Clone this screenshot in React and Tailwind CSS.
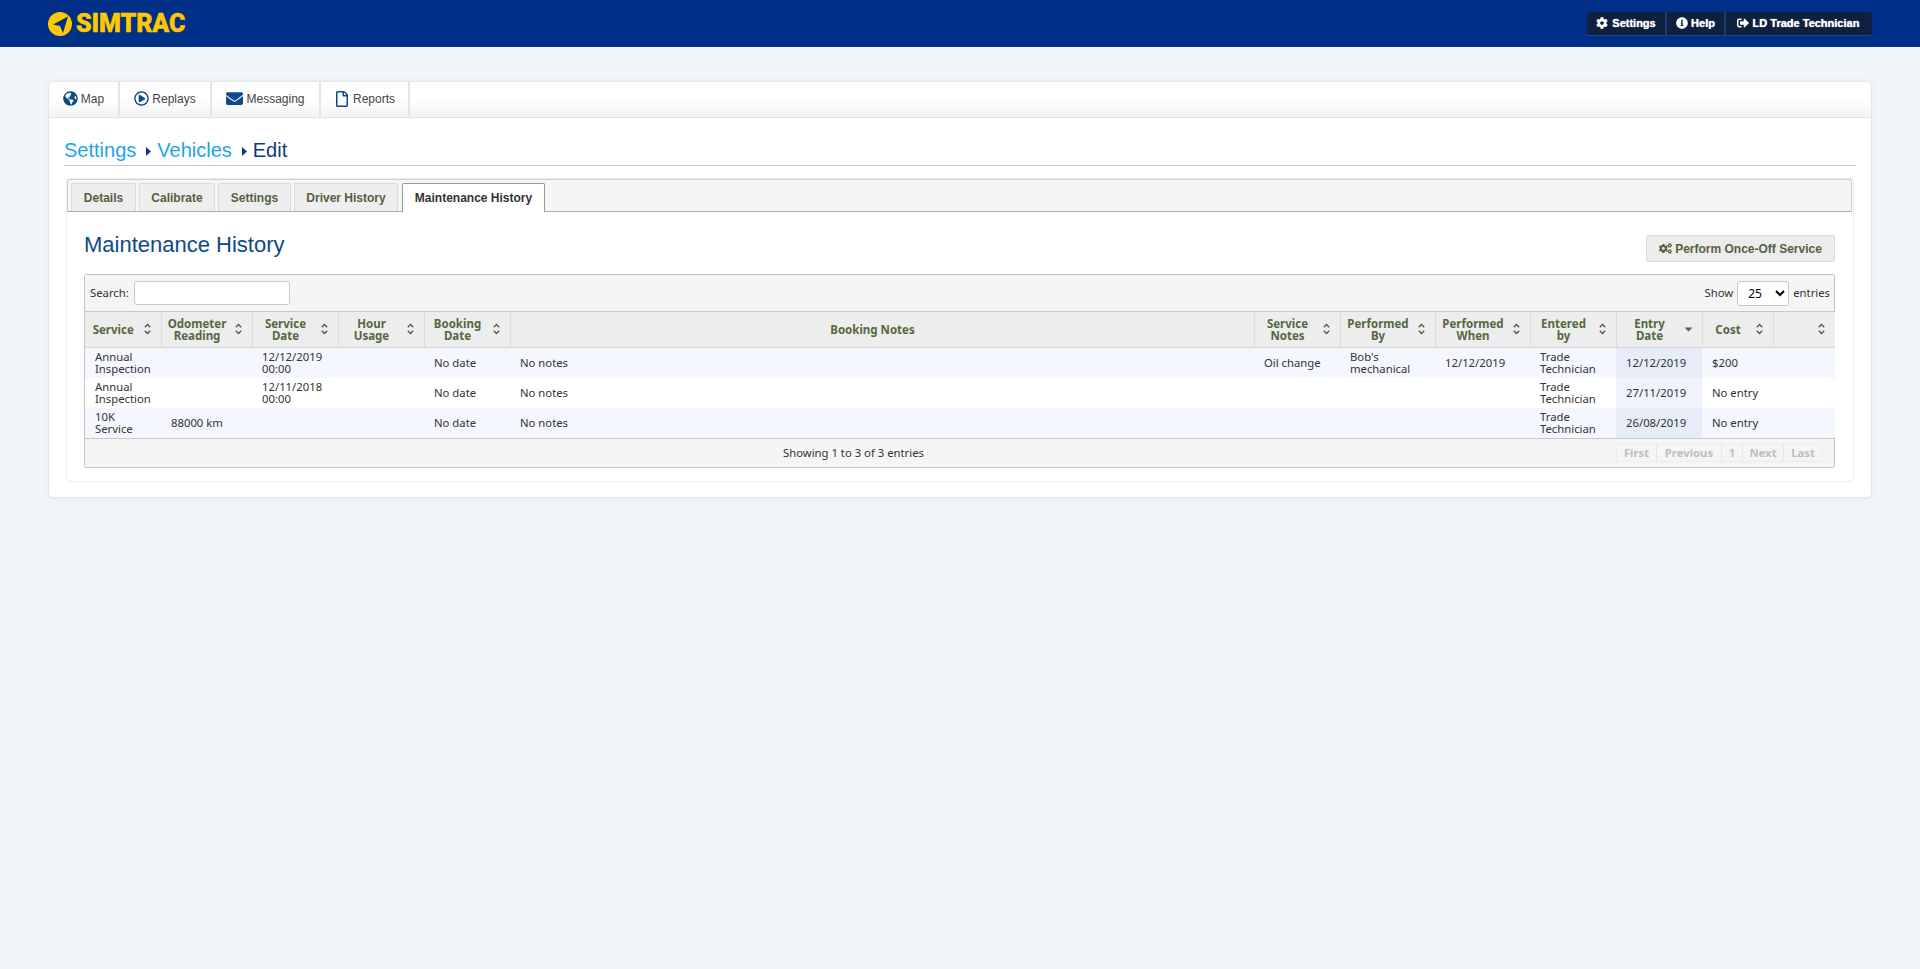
import React from "react";
import { FaGlobeAmericas, FaRegPlayCircle, FaEnvelope, FaRegFile, FaCog, FaInfoCircle, FaSignOutAlt, FaCogs } from "react-icons/fa";

const Sort = ({ active }) => (
  <span className="absolute right-[9px] top-1/2 -translate-y-1/2 w-[9px] h-[12px] flex items-center justify-center">
    {active ? (
      <svg width="9" height="5" viewBox="0 0 9 5"><path d="M0.5 0.5h8L4.5 4.5z" fill="#4f6a3a" /></svg>
    ) : (
      <svg width="9" height="12" viewBox="0 0 9 12" fill="none" stroke="#4d5a3a" strokeWidth="1.3"><path d="M1.8 4.3 4.5 1.5l2.7 2.8M1.8 7.7l2.7 2.8 2.7-2.8" /></svg>
    )}
  </span>
);

const Caret = () => (
  <svg className="ml-[10px] mr-[6px]" width="5" height="9" viewBox="0 0 5 9"><path d="M0 0l5 4.5L0 9z" fill="#0e3c78" /></svg>
);

const heads = [
  ["Service"], ["Odometer", "Reading"], ["Service", "Date"], ["Hour", "Usage"], ["Booking", "Date"], ["Booking Notes"],
  ["Service", "Notes"], ["Performed", "By"], ["Performed", "When"], ["Entered", "by"], ["Entry", "Date"], ["Cost"], [""],
];
const widths = ["w-[76px]", "w-[91px]", "w-[86px]", "w-[86px]", "w-[86px]", "w-[744px]", "w-[86px]", "w-[95px]", "w-[95px]", "w-[86px]", "w-[86px]", "w-[71px]", "w-[62px]"];
const rows = [
  ["Annual Inspection", "", "12/12/2019 00:00", "", "No date", "No notes", "Oil change", "Bob's mechanical", "12/12/2019", "Trade Technician", "12/12/2019", "$200", ""],
  ["Annual Inspection", "", "12/11/2018 00:00", "", "No date", "No notes", "", "", "", "Trade Technician", "27/11/2019", "No entry", ""],
  ["10K Service", "88000 km", "", "", "No date", "No notes", "", "", "", "Trade Technician", "26/08/2019", "No entry", ""],
];
const nav = [
  [FaGlobeAmericas, "Map", "w-[71px]", "text-[15px]"],
  [FaRegPlayCircle, "Replays", "w-[92px]", "text-[15px]"],
  [FaEnvelope, "Messaging", "w-[109px]", "text-[17px]"],
  [FaRegFile, "Reports", "w-[89px]", "text-[16px]"],
];
const tabs = [["Details", "w-[65px]"], ["Calibrate", "w-[76px]"], ["Settings", "w-[73px]"], ["Driver History", "w-[104px]"]];
const pager = [["First", "w-[40px]"], ["Previous", "w-[65px]"], ["1", "w-[21px]"], ["Next", "w-[41px]"], ["Last", "w-[38px]"]];

export default function App() {
  return (
    <div className="min-h-screen bg-[#f2f6f9] font-['Liberation_Sans',Arial,sans-serif]">
      <header className="h-[47px] bg-[#002f87] flex items-center justify-between pl-[48px] pr-[48px]">
        <div className="flex items-center gap-[4px] text-[#ffc800]">
          <svg width="24" height="24" viewBox="0 0 24 24"><circle cx="12" cy="12" r="12" fill="#ffc800" /><path d="M5 12.5 20 4.5 15 21 12 14z" fill="#002f87" /></svg>
          <span className="font-['Roboto',sans-serif] font-black text-[25px] leading-none tracking-[-0.1px] [-webkit-text-stroke:0.4px_#ffc800]">SIMTRAC</span>
        </div>
        <div className="flex h-[24px] rounded-[3px] bg-[#0d2040] border-b border-[#1d4a8c] text-white text-[11px] font-bold [text-shadow:0_0_1px_#fff]">
          <div className="w-[80px] flex items-center justify-center gap-[4px] border-r-2 border-[#1d3d70]"><FaCog className="text-[12px]" />Settings</div>
          <div className="w-[59px] flex items-center justify-center gap-[3px] border-r-2 border-[#1d3d70]"><FaInfoCircle className="text-[12px]" />Help</div>
          <div className="w-[146px] flex items-center justify-center gap-[4px] pr-[2px]"><FaSignOutAlt className="text-[12px]" />LD Trade Technician</div>
        </div>
      </header>

      <main className="pl-[48px] pr-[48px] pt-[34px]">
        <div className="h-[417px] bg-white rounded-[5px] border border-[#e4e7ea] shadow-[0_0_6px_rgba(0,0,0,0.06)] overflow-hidden">
          <nav className="h-[36px] flex border-b border-[#e5e3da] bg-gradient-to-b from-white from-[50%] to-[#f3f3f3]">
            {nav.map(([Icon, label, w, size]) => (
              <div key={label} className={`${w} flex items-center justify-center gap-[3px] pb-[2px] border-r-2 border-[#e8e6df] text-[12px] text-[#444]`}>
                <Icon className={`${size} text-[#0e4a86]`} />{label}
              </div>
            ))}
          </nav>

          <div className="px-[15px]">
            <div className="h-[48px] flex items-end pb-[3px] border-b border-[#c8c8c8] text-[20px] leading-[24px]">
              <span className="text-[#1ea4ee]">Settings</span>
              <span className="h-[24px] flex items-center pt-[2px]"><Caret /></span>
              <span className="text-[#1ea4ee]">Vehicles</span>
              <span className="h-[24px] flex items-center pt-[2px]"><Caret /></span>
              <span className="text-[#123a78]">Edit</span>
            </div>

            <div className="mt-[12px] h-[304px] border border-[#ececec] rounded-[3px] p-[1px] pr-[2px] mr-[2px] ml-[2px] bg-white">
              <div className="h-[33px] flex items-end gap-[3px] pl-[3px] bg-[#f5f5f5] border border-[#cfcfcf] rounded-t-[3px] -mx-[1px] -mt-[1px] border-b-[#ababab]">
                {tabs.map(([t, w]) => (
                  <div key={t} className={`${w} h-[28px] flex items-center justify-center bg-[#eeeeee] border border-b-0 border-[#dcdcdc] rounded-t-[2px] text-[12px] font-bold text-[#55603f]`}>{t}</div>
                ))}
                <div className="w-[143px] h-[29px] ml-[1px] -mb-[1px] flex items-center justify-center bg-white border border-b-0 border-[#9a9a9a] rounded-t-[2px] text-[12px] font-bold text-[#333]">Maintenance History</div>
              </div>

              <div className="pl-[16px] pr-[16px]">
                <div className="h-[62px] flex items-start justify-between pt-[20px]">
                  <h2 className="text-[22px] leading-[26px] text-[#0e4a86]">Maintenance History</h2>
                  <button className="w-[189px] h-[27px] mt-[3px] flex items-center justify-center gap-[3px] bg-[#ececec] border border-[#dcdcdc] rounded-[2px] text-[12px] font-bold text-[#55603f]">
                    <FaCogs className="text-[13px]" />Perform Once-Off Service
                  </button>
                </div>

                <div className="border border-[#c4c4c4] rounded-[2px] font-['Noto_Sans',sans-serif] text-[11.3px] leading-[12px] text-[#333]">
                  <div className="h-[37px] flex items-center justify-between px-[5px] pr-[4px] bg-[#f5f5f5] border-b border-[#c8c8c8]">
                    <label className="flex items-center gap-[5px]">Search:<input className="w-[156px] h-[24px] bg-white border border-[#c8c8c8] rounded-[3px]" /></label>
                    <label className="flex items-center gap-[4px]">Show
                      <select defaultValue="25" className="w-[52px] h-[25px] bg-white border border-[#c8c8c8] rounded-[3px] pl-[6px] text-[12px] text-black"><option>25</option></select>
                      entries</label>
                  </div>

                  <table className="w-[1750px] table-fixed border-collapse">
                    <colgroup>{widths.map((w, i) => <col key={i} className={w} />)}</colgroup>
                    <thead>
                      <tr className="h-[35px] bg-[#ededed] border-b border-[#d4d4d4]">
                        {heads.map((h, i) => (
                          <th key={i} className="relative border-r border-[#dcdcdc] last:border-r-0 pl-[5px] pr-[24px] pt-[1px] text-center align-middle text-[11.5px] font-bold text-[#55683f]">
                            {h.map((l) => <div key={l}>{l}</div>)}
                            {i !== 5 && <Sort active={i === 10} />}
                          </th>
                        ))}
                      </tr>
                    </thead>
                    <tbody>
                      {rows.map((r, ri) => (
                        <tr key={ri} className={ri % 2 === 0 ? "h-[30px] bg-[#f4f7fe]" : "h-[30px] bg-white"}>
                          {r.map((c, ci) => (
                            <td key={ci} className={ci === 10 ? (ri % 2 === 0 ? "px-[10px] py-[3px] align-middle bg-[#e6edf9]" : "px-[10px] py-[3px] align-middle bg-[#eff3fb]") : "px-[10px] py-[3px] align-middle"}>{c}</td>
                          ))}
                        </tr>
                      ))}
                    </tbody>
                  </table>

                  <div className="h-[29px] flex items-center bg-[#f5f5f5] border-t border-[#c8c8c8] pr-[11px]">
                    <div className="flex-1 text-center pl-[6px]">Showing 1 to 3 of 3 entries</div>
                    <div className="h-[18px] flex items-center border border-[#ececec] rounded-[2px] font-bold text-[#bdbdbd]">
                      {pager.map(([p, w], i) => (
                        <span key={p} className={`${w} text-center leading-[16px] ${i < 4 ? "border-r border-[#e6e6e6]" : ""}`}>{p}</span>
                      ))}
                    </div>
                  </div>
                </div>
              </div>
            </div>
          </div>
        </div>
      </main>
    </div>
  );
}
